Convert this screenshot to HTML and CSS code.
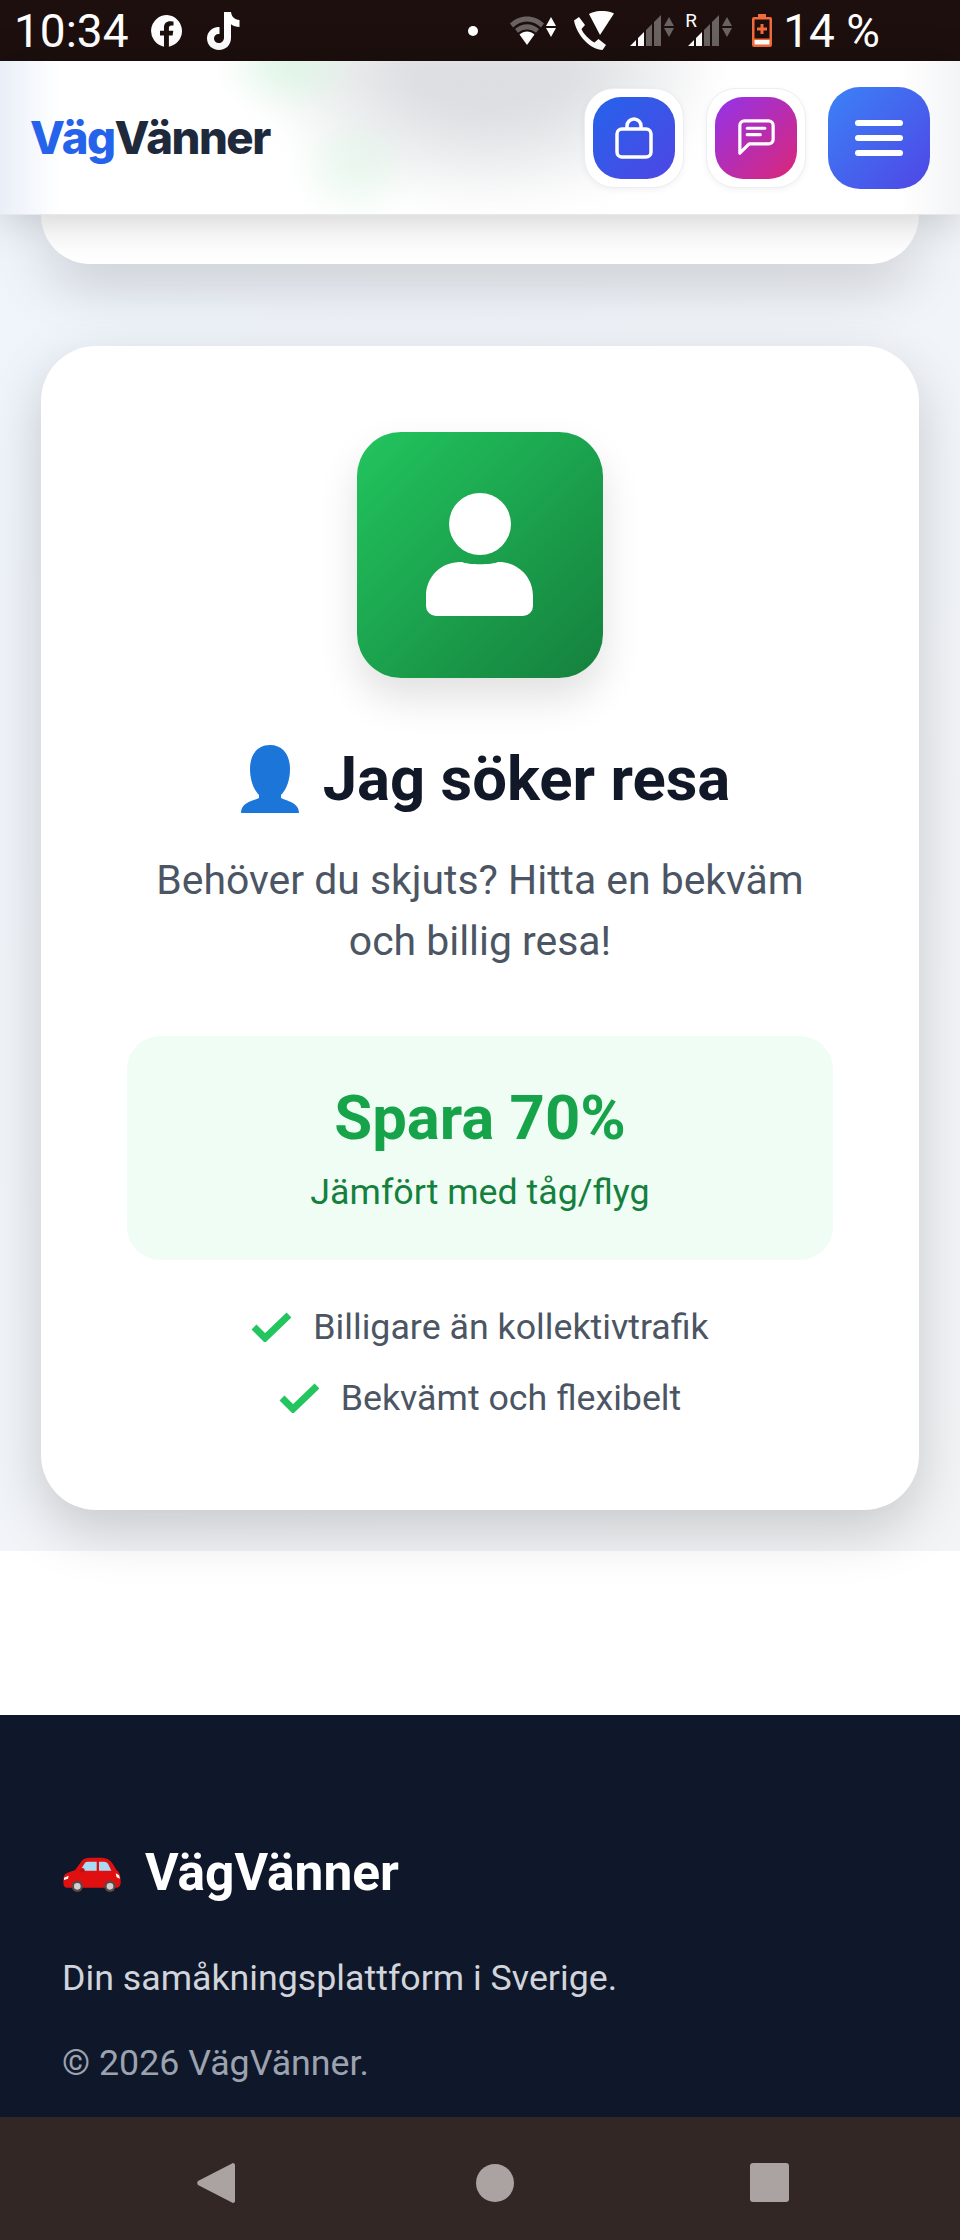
FILE: index.html
```html
<!DOCTYPE html>
<html lang="sv">
  <head>
    <meta charset="UTF-8" />
    <meta name="viewport" content="width=device-width,initial-scale=1.0" />
    <title>VägVänner</title>
    <link rel="stylesheet" href="styles.css">
  </head>
  <body>
    <div class="status">
      <div class="status-left">
        <span class="clock">10:34</span>
        <svg class="ic-fb" viewBox="0 0 34 34"><path fill="#fff" d="M17 1a16 16 0 0 0-3 31.700V21.500h-4v-4.800h4v-3.200c0-4 2.400-6.200 6-6.200 1.700 0 3.500.3 3.500.3v4h-2c-2 0-2.600 1.200-2.600 2.500v2.600h4.400l-.7 4.800h-3.700v11.200A16 16 0 0 0 17 1z"/></svg>
        <svg class="ic-tt" viewBox="0 0 36 40"><path fill="#fff" d="M19 1h7c.4 4.500 3.500 7.500 8.500 8v7c-3.300 0-6.200-1-8.500-2.700V27c0 7-5.200 12-12 12S2 34 2 27.500 7.300 15.500 14.500 16v7c-3-.5-5.500 1.500-5.500 4.500 0 2.700 2 4.500 4.700 4.500 3 0 5.300-2 5.300-5.500z"/></svg>
      </div>
      <div class="status-right">
        <span class="dot"></span>
        <svg class="ic-wifi" viewBox="0 0 46 30">
          <path fill="#6a6361" d="M0 7.500C9-2 25-2 34 7.500l-3 4C23 3.500 11 3.500 3 11.500z"/>
          <path fill="#6a6361" d="M5 13c7-6.500 17-6.500 24 0l-3 3.800c-5-4.500-13-4.500-18 0z"/>
          <path fill="#fff" d="M9.500 18.500c4.500-4 10.500-4 15 0L17 29z"/>
          <path fill="#fff" d="M41 1l5 9H36zM41 21l-5-9h10z"/>
        </svg>
        <svg class="ic-call" viewBox="0 0 42 40">
          <path fill="#fff" d="M16 3C23-1 34-1 41 2.500L27 24z"/>
          <path fill="#fff" d="M1 9.500l5-3.500 6 8-3.500 4c1.500 4.500 8 11 13 13.500l4-3.500 7.500 6-3.500 5C18 39 4 25 1 9.500z"/>
        </svg>
        <svg class="ic-signal" viewBox="0 0 44 31">
          <path fill="#fff" d="M0 31L6 25V31zM8 23l6-6V31H8z"/>
          <path fill="#6a6361" d="M16 15l6-6V31h-6zM24 7l7-7V31h-7z"/>
          <path fill="#6a6361" d="M39 2l5 9H34zM39 22l-5-9h10z"/>
        </svg>
        <span class="roam">R</span>
        <svg class="ic-signal" viewBox="0 0 44 31">
          <path fill="#fff" d="M0 31L6 25V31zM8 23l6-6V31H8z"/>
          <path fill="#6a6361" d="M16 15l6-6V31h-6zM24 7l7-7V31h-7z"/>
          <path fill="#6a6361" d="M39 2l5 9H34zM39 22l-5-9h10z"/>
        </svg>
        <svg class="ic-batt" viewBox="0 0 20 33">
          <path fill="#f26b3a" d="M6 0h8v3h4a2 2 0 0 1 2 2v26a2 2 0 0 1-2 2H2a2 2 0 0 1-2-2V5a2 2 0 0 1 2-2h4z"/>
          <rect x="2.500" y="5.500" width="15" height="19" fill="#1c0f0d"/>
          <rect x="2.500" y="26" width="15" height="4.500" fill="#fff"/>
          <path fill="#f26b3a" d="M8.500 10h3v3.500H15v3h-3.500V20h-3v-3.500H5v-3h3.500z"/>
        </svg>
        <span class="percent">14 %</span>
      </div>
    </div>

    <header class="header">
      <div class="blur-clip"><div class="blur-behind"></div></div>
      <div class="logo"><span class="logo-blue">Väg</span>Vänner</div>
      <div class="actions">
        <div class="action-wrap">
          <div class="action action-bag">
            <svg viewBox="0 0 38 42" fill="none" stroke="#fff" stroke-width="3.500"><rect x="2" y="12" width="34" height="28" rx="5"/><path d="M12 12V9a7 7 0 0 1 14 0v3"/></svg>
          </div>
        </div>
        <div class="action-wrap">
          <div class="action action-chat">
            <svg viewBox="0 0 40 40" fill="none" stroke="#fff" stroke-width="3.500" stroke-linecap="round" stroke-linejoin="round"><path d="M2 37V7a5 5 0 0 1 5-5h26a5 5 0 0 1 5 5v15a5 5 0 0 1-5 5H12z"/><path d="M10 10h19M10 17h14"/></svg>
          </div>
        </div>
        <button class="menu-btn">
          <span></span><span></span><span></span>
        </button>
      </div>
    </header>

    <main class="section">
      <div class="card-stub"></div>
      <article class="card">
        <div class="hero-icon">
          <svg viewBox="0 0 246 246"><circle cx="123" cy="92" r="31" fill="#fff"/><path fill="#fff" d="M69 170v-6c0-20 16-34 34-34h2c6 3 30 3 36 0h1c18 0 34 14 34 34v10a10 10 0 0 1-10 10H79a10 10 0 0 1-10-10z"/></svg>
        </div>
        <h2 class="card-title">
          <svg class="title-emoji" viewBox="0 0 58 68"><path fill="#1c75d8" d="M29 0c13 0 20 10 20 24 0 10-3 20-9 26v3c5 3 18 4 18 15H0c0-11 13-12 18-15v-3C12 44 9 34 9 24 9 10 16 0 29 0z"/></svg>
          Jag söker resa
        </h2>
        <p class="card-text">Behöver du skjuts? Hitta en bekväm och billig resa!</p>
        <div class="savings">
          <div class="savings-big">Spara 70%</div>
          <div class="savings-small">Jämfört med tåg/flyg</div>
        </div>
        <ul class="features">
          <li><svg viewBox="0 0 41 30"><path d="M3 15l11 11L38 3" fill="none" stroke="#22c55e" stroke-width="7"/></svg>Billigare än kollektivtrafik</li>
          <li><svg viewBox="0 0 41 30"><path d="M3 15l11 11L38 3" fill="none" stroke="#22c55e" stroke-width="7"/></svg>Bekvämt och flexibelt</li>
        </ul>
      </article>
    </main>

    <div class="gap"></div>

    <footer class="footer">
      <div class="footer-brand">
        <svg class="car" viewBox="0 0 172 108">
          <path fill="#e01010" d="M5 52c8-6 20-9 30-12L55 12C60 5 70 2 80 2h35c15 0 25 6 33 18l12 20c8 5 12 15 12 35 0 10-4 17-12 17H10C3 92 0 85 0 75c0-10 1-18 5-23z"/>
          <path fill="#a9dcf4" d="M50 41L65 17c2-2 5-3 8-3h27v27zM107 14h15c5 0 9 2 12 6l10 21h-37z"/>
          <circle cx="57" cy="40" r="7" fill="#c01010"/>
          <path fill="#fff" d="M2 62l14-6-2 9-12 4zM170 65l-10-4-3-12 10 6z"/>
          <circle cx="42" cy="88" r="17" fill="#5a4a45"/><circle cx="42" cy="88" r="10" fill="#d0d0d0"/>
          <circle cx="140" cy="88" r="17" fill="#5a4a45"/><circle cx="140" cy="88" r="10" fill="#d0d0d0"/>
        </svg>
        <span>VägVänner</span>
      </div>
      <p class="footer-text">Din samåkningsplattform i Sverige.</p>
      <p class="footer-copy">© 2026 VägVänner.</p>
    </footer>

    <nav class="navbar">
      <svg class="nav-back" viewBox="0 0 38 42"><path fill="#aaa3a2" d="M36 1c1 0 2 1 2 2v36c0 1-1 2-2 2-.5 0-1-.2-1.500-.7L1 23c-1-1-1-3 0-4L34.500 1.700C35 1.200 35.500 1 36 1z"/></svg>
      <span class="nav-home"></span>
      <span class="nav-recent"></span>
    </nav>
  </body>
</html>
```

FILE: styles.css
```css
* {
  box-sizing: border-box;
}
body {
  margin: 0;
  width: 960px;
  height: 2240px;
  overflow: hidden;
  display: flex;
  flex-direction: column;
  font-family: Roboto, "Liberation Sans", sans-serif;
  background: #fff;
}

/* phone status bar */
.status {
  height: 61px;
  background: #1c0f0d;
  color: #fff;
  display: flex;
  justify-content: space-between;
  align-items: center;
  padding: 0 80px 0 14px;
  font-size: 46px;
}
.status-left, .status-right {
  display: flex;
  align-items: center;
}
.clock {
  width: 136px;
}
.ic-fb {
  width: 34px;
  height: 34px;
}
.ic-tt {
  width: 36px;
  height: 40px;
  margin-left: 21px;
}
.dot {
  width: 10px;
  height: 10px;
  border-radius: 50%;
  background: #fff;
  margin-right: 32px;
}
.ic-wifi {
  width: 46px;
  height: 30px;
  margin-right: 17px;
}
.ic-call {
  width: 42px;
  height: 40px;
  margin-right: 15px;
}
.ic-signal {
  width: 44px;
  height: 31px;
}
.roam {
  font-size: 19px;
  width: 0;
  position: relative;
  top: -10px;
  left: 11px;
}
.ic-signal + .roam + .ic-signal {
  margin-left: 14px;
}
.ic-batt {
  width: 20px;
  height: 33px;
  margin: 0 11px 0 20px;
}

/* site header */
.header {
  height: 154px;
  position: relative;
  z-index: 2;
  display: flex;
  justify-content: space-between;
  align-items: center;
  padding: 0 30px 0 30px;
  background: linear-gradient(90deg, #e9eff8 0, #fff 60px, #fff 900px, #f3f4f6 960px);
  border-bottom: 1px solid #e8e8e8;
  box-shadow: 0 5px 40px rgba(0, 0, 0, 0.2);
}
/* page content seen blurred through the header */
.blur-clip {
  position: absolute;
  top: 0;
  left: 0;
  right: 0;
  bottom: 0;
  overflow: hidden;
}
.blur-behind {
  position: absolute;
  top: -20px;
  left: 230px;
  width: 480px;
  height: 173px;
  filter: blur(16px);
  background:
    radial-gradient(ellipse 70px 50px at 60px 20px, #d5f4de, transparent),
    radial-gradient(ellipse 60px 50px at 125px 125px, #e2f6e9, transparent),
    radial-gradient(ellipse 240px 150px at 260px 20px, #dcdee1 35%, transparent);
}
.logo {
  position: relative;
  font-family: Inter, sans-serif;
  font-weight: 800;
  font-size: 45.5px;
  letter-spacing: -1.5px;
  color: #1e293b;
}
.logo-blue {
  color: #2563eb;
}
.actions {
  position: relative;
  display: flex;
  align-items: center;
  gap: 22px;
}
.action-wrap {
  width: 100px;
  height: 100px;
  padding: 8px;
  border-radius: 30px;
  background: #fff;
  border: 1px solid #eceef2;
  box-shadow: 0 2px 6px rgba(0, 0, 0, 0.05);
}
.action {
  height: 100%;
  border-radius: 28px;
  display: flex;
  align-items: center;
  justify-content: center;
}
.action-bag {
  background: linear-gradient(135deg, #2563eb, #4f46e5);
}
.action-bag svg {
  width: 38px;
  height: 42px;
}
.action-chat {
  background: linear-gradient(135deg, #9333ea, #db2777);
}
.action-chat svg {
  width: 37px;
  height: 37px;
}
.menu-btn {
  width: 102px;
  height: 102px;
  border: 0;
  padding: 0;
  border-radius: 32px;
  background: linear-gradient(135deg, #3b82f6, #4f46e5);
  display: flex;
  flex-direction: column;
  align-items: center;
  justify-content: center;
  gap: 9px;
}
.menu-btn span {
  width: 48px;
  height: 6px;
  border-radius: 3px;
  background: #fff;
}

/* main section */
.section {
  height: 1336px;
  padding: 0 41px;
  background: linear-gradient(135deg, #eff4fb, #f3f4f6);
  position: relative;
  z-index: 1;
}
.card-stub {
  height: 49px;
  background: #fff;
  border-radius: 0 0 55px 55px;
  box-shadow: 0 20px 55px rgba(0, 0, 0, 0.18);
}
.card {
  margin-top: 82px;
  height: 1164px;
  background: #fff;
  border-radius: 55px;
  box-shadow: 0 20px 55px rgba(0, 0, 0, 0.18);
  padding: 86px 86px 0;
  text-align: center;
}
.hero-icon {
  width: 246px;
  height: 246px;
  margin: 0 auto;
  border-radius: 44px;
  background: linear-gradient(135deg, #22c55e, #15803d);
  box-shadow: 0 20px 40px rgba(0, 0, 0, 0.12);
}
.hero-icon svg {
  display: block;
}
.card-title {
  margin: 62px 0 0;
  padding-left: 11px;
  height: 78px;
  font-size: 61.6px;
  line-height: 78px;
  font-weight: 700;
  color: #111827;
  white-space: nowrap;
  display: flex;
  justify-content: center;
  align-items: center;
  gap: 24px;
}
.title-emoji {
  width: 58px;
  height: 68px;
}
.card-text {
  margin: 32px 0 0;
  font-size: 40.9px;
  line-height: 61px;
  color: #4b5563;
}
.savings {
  margin-top: 64px;
  height: 224px;
  border-radius: 33px;
  background: #f0fdf4;
  padding-top: 47px;
}
.savings-big {
  font-size: 61.6px;
  line-height: 70px;
  font-weight: 700;
  color: #16a34a;
}
.savings-small {
  margin-top: 14px;
  font-size: 35.75px;
  line-height: 50px;
  color: #15803d;
}
.features {
  list-style: none;
  margin: 42px 0 0;
  padding: 0;
  font-size: 35.75px;
  line-height: 50px;
  color: #4b5563;
}
.features li {
  display: flex;
  justify-content: center;
  align-items: center;
  gap: 21px;
  margin-bottom: 21px;
}
.features svg {
  width: 41px;
  height: 30px;
}

/* white strip before footer */
.gap {
  height: 164px;
}

.footer {
  height: 402px;
  background: #0f172a;
  padding: 129px 63px 0;
  color: #fff;
}
.footer-brand {
  display: flex;
  align-items: center;
  gap: 24px;
  height: 56px;
  font-size: 51.5px;
  font-weight: 700;
}
.car {
  width: 58px;
  height: 36px;
  margin-top: 6px;
}
.footer-text {
  margin: 53px 0 0 -1px;
  font-size: 35.75px;
  line-height: 50px;
  color: #d1d5db;
}
.footer-copy {
  margin: 35px 0 0 -1px;
  font-size: 35.75px;
  line-height: 50px;
  color: #9ca3af;
}

/* phone nav bar */
.navbar {
  height: 123px;
  background: #332725;
  display: flex;
  align-items: center;
  padding: 8px 0 0 197px;
}
.nav-back {
  width: 38px;
  height: 42px;
  margin-right: 241px;
}
.nav-home {
  width: 38px;
  height: 38px;
  border-radius: 50%;
  background: #aaa3a2;
  margin-right: 236px;
}
.nav-recent {
  width: 39px;
  height: 39px;
  border-radius: 3px;
  background: #aaa3a2;
}
```
